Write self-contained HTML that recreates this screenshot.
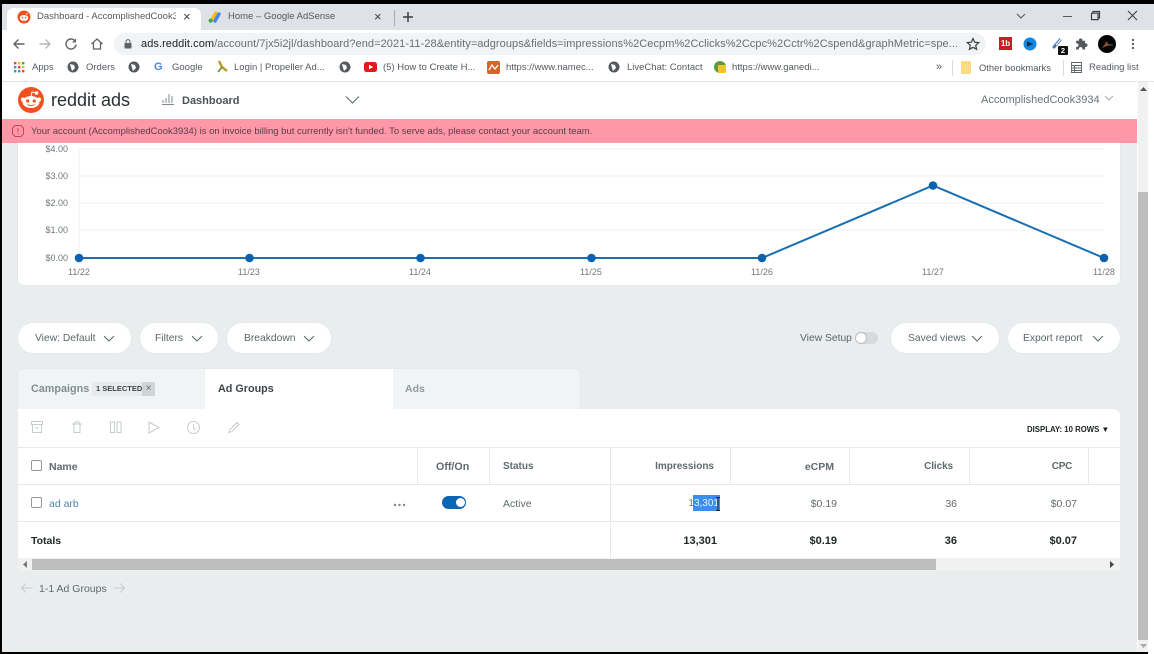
<!DOCTYPE html>
<html><head><meta charset="utf-8"><style>
html,body{margin:0;padding:0;width:1154px;height:654px;overflow:hidden;background:#e9eded}
body{position:relative;font-family:"Liberation Sans",sans-serif;font-size:10.5px;color:#5f6a6d}
.a{position:absolute}
.t{position:absolute;white-space:nowrap;line-height:14px}
.r{position:absolute;white-space:nowrap;line-height:14px;transform:translateX(-100%)}
.pill{position:absolute;top:323px;height:30px;background:#fff;border-radius:15px;box-shadow:0 0 1px #d5d9d9;color:#5c6669;font-size:10.3px;line-height:31px}
.pill span{position:absolute;left:17px;white-space:nowrap}
.pill svg{position:absolute;top:12px}
.b{font-weight:bold}
.bm{color:#555a5f;font-size:9.5px}
.h{font-weight:bold;color:#5f6a6d;font-size:10px}
.vl{position:absolute;width:1px;background:#e8eaea}
.hl{position:absolute;height:1px;background:#e8eaea;left:18px;width:1102px}
</style></head><body>
<!-- frame -->
<div class="a" style="left:0;top:0;width:1154px;height:4px;background:#000"></div>
<div class="a" style="left:0;top:4px;width:1154px;height:26px;background:#dee1e6"></div>
<div class="a" style="left:7px;top:8px;width:194px;height:22px;background:#fff;border-radius:7px 7px 0 0"></div>
<div class="a" style="left:0;top:30px;width:1154px;height:51px;background:#fff"></div>
<div class="a" style="left:0;top:81px;width:1154px;height:1px;background:#e2e4e6"></div>
<!-- tabs -->
<svg class="a" style="left:17px;top:10px" width="14" height="14" viewBox="0 0 14 14"><circle cx="7" cy="7" r="6.5" fill="#f1501f"/><ellipse cx="7" cy="8" rx="4.2" ry="3" fill="#fff"/><circle cx="5.4" cy="7.6" r=".8" fill="#f1501f"/><circle cx="8.6" cy="7.6" r=".8" fill="#f1501f"/><circle cx="9.8" cy="3.8" r=".8" fill="#fff"/></svg>
<div class="t" style="left:37px;top:10px;font-size:9.5px;color:#55595e;width:139px;overflow:hidden">Dashboard - AccomplishedCook3</div>
<div class="t" style="left:183px;top:10px;font-size:13px;color:#3c4043">×</div>
<svg class="a" style="left:208px;top:11px" width="14" height="12" viewBox="0 0 14 12"><path d="M3 10L8 2" stroke="#fbbc04" stroke-width="3.4" stroke-linecap="round"/><path d="M7 10L11 3" stroke="#4285f4" stroke-width="3.4" stroke-linecap="round"/><circle cx="2.6" cy="9.6" r="2" fill="#34a853"/></svg>
<div class="t" style="left:228px;top:10px;font-size:9.5px;color:#55595e">Home – Google AdSense</div>
<div class="t" style="left:374px;top:10px;font-size:13px;color:#3c4043">×</div>
<div class="a" style="left:394px;top:10px;width:1px;height:16px;background:#a8abb0"></div>
<svg class="a" style="left:402px;top:11px" width="12" height="12"><path d="M6 1v10M1 6h10" stroke="#3c4043" stroke-width="1.5"/></svg>
<svg class="a" style="left:1015px;top:11px" width="12" height="10"><path d="M2 3l4 4 4-4" fill="none" stroke="#55595e" stroke-width="1.1"/></svg>
<div class="a" style="left:1063px;top:16px;width:9px;height:1.4px;background:#55595e"></div>
<svg class="a" style="left:1090px;top:10px" width="11" height="11"><path d="M3 3V1.5h6.5V8H8M1.5 3.2H8v6.4H1.500z" fill="none" stroke="#3c4043" stroke-width="1.2"/></svg>
<svg class="a" style="left:1127px;top:10px" width="11" height="11"><path d="M1 1l9 9M10 1l-9 9" stroke="#3c4043" stroke-width="1.1"/></svg>
<!-- toolbar -->
<svg class="a" style="left:12px;top:37px" width="14" height="14"><path d="M12.5 7H2M6.5 2.5L2 7l4.5 4.5" fill="none" stroke="#5f6368" stroke-width="1.4"/></svg>
<svg class="a" style="left:38px;top:37px" width="14" height="14"><path d="M1.5 7H12M7.5 2.5L12 7l-4.5 4.5" fill="none" stroke="#b6b9bd" stroke-width="1.4"/></svg>
<svg class="a" style="left:64px;top:37px" width="14" height="14"><path d="M11.4 4.6A5 5 0 1 0 12 7.5" fill="none" stroke="#5f6368" stroke-width="1.4"/><path d="M12 1.5v4H8z" fill="#5f6368"/></svg>
<svg class="a" style="left:90px;top:37px" width="14" height="14"><path d="M1.5 7L7 2l5.5 5M3.5 6v6h7V6" fill="none" stroke="#5f6368" stroke-width="1.3"/></svg>
<div class="a" style="left:114px;top:33px;width:872px;height:22px;background:#f1f3f4;border-radius:11px"></div>
<svg class="a" style="left:124px;top:39px" width="8" height="10"><rect x=".5" y="4" width="7" height="5.5" rx=".8" fill="#5f6368"/><path d="M2 4.5V2.6a2 2 0 0 1 4 0v2" fill="none" stroke="#5f6368"/></svg>
<div class="t" style="left:141px;top:37px;font-size:11px;color:#6a6e73;letter-spacing:.07px;width:820px;overflow:hidden"><span style="color:#202124">ads.reddit.com</span>/account/7jx5i2jl/dashboard?end=2021-11-28&amp;entity=adgroups&amp;fields=impressions%2Cecpm%2Cclicks%2Ccpc%2Cctr%2Cspend&amp;graphMetric=spe...</div>
<svg class="a" style="left:966px;top:37px" width="14" height="14" viewBox="0 0 14 14"><path d="M7 1.5l1.7 3.7 4 .4-3 2.7.9 4L7 10.3l-3.6 2 .9-4-3-2.7 4-.4z" fill="none" stroke="#3c4043" stroke-width="1.2"/></svg>
<div class="a" style="left:999px;top:37px;width:13px;height:13px;background:#c9201f;color:#fff;font-size:8px;font-weight:bold;line-height:13px;text-align:center">1b</div>
<svg class="a" style="left:1023px;top:37px" width="14" height="14"><circle cx="7" cy="7" r="6.5" fill="#1187e0"/><path d="M4 4.3L10.3 7 4 9.8z" fill="#14324f"/></svg>
<svg class="a" style="left:1051px;top:37px" width="13" height="13"><path d="M3 10l6-7" stroke="#4a77b8" stroke-width="3" stroke-linecap="round"/><path d="M5 8l5-6" stroke="#fff" stroke-width="1"/></svg>
<div class="a" style="left:1058px;top:46px;width:10px;height:9px;background:#111;color:#fff;font-size:7.5px;font-weight:bold;line-height:9px;text-align:center;border-radius:1px">2</div>
<svg class="a" style="left:1075px;top:37px" width="13" height="13" viewBox="0 0 12 12"><path d="M1 3.5h2.6a1.7 1.7 0 1 1 3.2 0H9.3v2.4a1.7 1.7 0 1 1 0 3.2V11.5H6.800a1.7 1.7 0 1 0-3.2 0H1V9.100a1.7 1.7 0 1 0 0-3.2z" fill="#55595e"/></svg>
<svg class="a" style="left:1098px;top:35px" width="18" height="18"><circle cx="9" cy="9" r="9" fill="#050505"/><path d="M4 13l5-7 1 3 4 .5-5 1.500z" fill="#8a5230"/><path d="M10 10h5" stroke="#3e6b3a"/></svg>
<svg class="a" style="left:1131px;top:38px" width="4" height="12"><circle cx="2" cy="2" r="1.2" fill="#5f6368"/><circle cx="2" cy="6" r="1.2" fill="#5f6368"/><circle cx="2" cy="10" r="1.2" fill="#5f6368"/></svg>
<!-- bookmarks -->
<svg class="a" style="left:14px;top:62px" width="11" height="11"><g><rect x="0" y="0" width="2.4" height="2.4" fill="#ea4335"/><rect x="4" y="0" width="2.4" height="2.4" fill="#fbbc04"/><rect x="8" y="0" width="2.4" height="2.4" fill="#34a853"/><rect x="0" y="4" width="2.4" height="2.4" fill="#4285f4"/><rect x="4" y="4" width="2.4" height="2.4" fill="#ea4335"/><rect x="8" y="4" width="2.4" height="2.4" fill="#fbbc04"/><rect x="0" y="8" width="2.4" height="2.4" fill="#34a853"/><rect x="4" y="8" width="2.4" height="2.4" fill="#4285f4"/><rect x="8" y="8" width="2.4" height="2.4" fill="#ea4335"/></g></svg>
<div class="t bm" style="left:32px;top:61px">Apps</div>
<svg class="a" style="left:67px;top:61px" width="12" height="12"><circle cx="6" cy="6" r="5.5" fill="#55595e"/><path d="M3 3l4 1 1 3-3 3-1-3z" fill="#fff"/></svg>
<div class="t bm" style="left:86px;top:61px">Orders</div>
<svg class="a" style="left:128px;top:61px" width="12" height="12"><circle cx="6" cy="6" r="5.5" fill="#55595e"/><path d="M3 3l4 1 1 3-3 3-1-3z" fill="#fff"/></svg>
<div class="t" style="left:154px;top:60px;font-size:11px;font-weight:bold;color:#4285f4">G</div>
<div class="t bm" style="left:172px;top:61px">Google</div>
<svg class="a" style="left:216px;top:60px" width="14" height="14"><path d="M3 1l3 6 5 4" fill="none" stroke="#b59a1c" stroke-width="2.4"/><path d="M2 12l4-5" stroke="#6f8a2b" stroke-width="1.6"/></svg>
<div class="t bm" style="left:234px;top:61px">Login | Propeller Ad...</div>
<svg class="a" style="left:339px;top:61px" width="12" height="12"><circle cx="6" cy="6" r="5.5" fill="#55595e"/><path d="M3 3l4 1 1 3-3 3-1-3z" fill="#fff"/></svg>
<svg class="a" style="left:364px;top:62px" width="13" height="10"><rect width="13" height="10" rx="2.5" fill="#e01b1b"/><path d="M5 2.6L9 5 5 7.4z" fill="#fff"/></svg>
<div class="t bm" style="left:383px;top:61px">(5) How to Create H...</div>
<div class="a" style="left:487px;top:61px;width:13px;height:13px;background:#d9632a;border-radius:2px"></div>
<svg class="a" style="left:488px;top:63px" width="11" height="9"><path d="M1 7l3-5 3 4 3-4" fill="none" stroke="#fff" stroke-width="1.3"/></svg>
<div class="t bm" style="left:506px;top:61px">https://www.namec...</div>
<svg class="a" style="left:608px;top:61px" width="12" height="12"><circle cx="6" cy="6" r="5.5" fill="#55595e"/><path d="M3 3l4 1 1 3-3 3-1-3z" fill="#fff"/></svg>
<div class="t bm" style="left:627px;top:61px">LiveChat: Contact</div>
<svg class="a" style="left:713px;top:60px" width="14" height="14"><circle cx="7" cy="7" r="6" fill="#5c9a3a"/><rect x="5" y="5" width="8" height="8" rx="1" fill="#f2c230"/></svg>
<div class="t bm" style="left:732px;top:61px">https://www.ganedi...</div>
<div class="t" style="left:936px;top:60px;font-size:11px;color:#55595e">»</div>
<div class="a" style="left:952px;top:60px;width:1px;height:16px;background:#d8dadd"></div>
<div class="a" style="left:961px;top:61px;width:10px;height:13px;background:#fbdc85;border-radius:1px"></div>
<div class="t bm" style="left:979px;top:61px;font-size:9.4px">Other bookmarks</div>
<div class="a" style="left:1063px;top:60px;width:1px;height:16px;background:#d8dadd"></div>
<svg class="a" style="left:1071px;top:62px" width="11" height="11"><path d="M.5.5h10v10H.5zM.5 3.500h10M.5 6h10M.5 8.500h10M3.500 3.500v7" fill="none" stroke="#5f6368" stroke-width=".9"/></svg>
<div class="t bm" style="left:1089px;top:61px">Reading list</div>
<!-- header -->
<div class="a" style="left:0;top:82px;width:1154px;height:37px;background:#fff"></div>
<svg class="a" style="left:18px;top:87px" width="26" height="26" viewBox="0 0 26 26"><circle cx="13" cy="13" r="13" fill="#f1501f"/><ellipse cx="13" cy="15" rx="8.5" ry="6" fill="#fff"/><circle cx="5" cy="12.5" r="2" fill="#fff"/><circle cx="21" cy="12.5" r="2" fill="#fff"/><circle cx="9.7" cy="14" r="1.6" fill="#f1501f"/><circle cx="16.3" cy="14" r="1.6" fill="#f1501f"/><path d="M9.5 17.5q3.5 2.2 7 0" fill="none" stroke="#f1501f" stroke-width="1"/><path d="M13 9.5l1-4.5 4 1" fill="none" stroke="#fff" stroke-width="1"/><circle cx="18.5" cy="6" r="1.8" fill="#fff"/></svg>
<div class="t" style="left:51px;top:90px;font-size:18px;line-height:20px;color:#2a2f33">reddit ads</div>
<svg class="a" style="left:162px;top:93px" width="13" height="12"><path d="M1 7v3M4 5v5M7 1v9M10 3v7M0 11.5h12" stroke="#7d8a8f" stroke-width="1"/></svg>
<div class="t b" style="left:182px;top:94px;font-size:11px;color:#4b5357">Dashboard</div>
<svg class="a" style="left:345px;top:95px" width="15" height="10"><path d="M1 1.5l6.5 6.5L14 1.500" fill="none" stroke="#5f6a6d" stroke-width="1.1"/></svg>
<div class="t" style="left:981px;top:93px;font-size:11px;color:#6a7377">AccomplishedCook3934</div>
<svg class="a" style="left:1104px;top:95px" width="10" height="7"><path d="M1 1l4 4 4-4" fill="none" stroke="#a7adb0"/></svg>
<!-- banner -->
<div class="a" style="left:0;top:119px;width:1137px;height:24px;background:#ff97a8"></div>
<svg class="a" style="left:11px;top:124px" width="14" height="14"><path d="M4 1.5h6L12.5 4v6L10 12.5H4L1.5 10V4z" fill="none" stroke="#c4475a"/><path d="M7 4v4M7 9.3v1" stroke="#c4475a"/></svg>
<div class="t" style="left:31px;top:125px;font-size:9.48px;color:#5a3d43">Your account (AccomplishedCook3934) is on invoice billing but currently isn't funded. To serve ads, please contact your account team.</div>
<!-- chart -->
<div class="a" style="left:18px;top:143px;width:1102px;height:142px;background:#fff;border-radius:0 0 6px 6px;box-shadow:0 0 1px #d5d9d9"></div>
<svg class="a" style="left:0;top:143px" width="1137" height="142">
<g stroke="#f0f2f2"><path d="M79 6H1104M79 33H1104M79 60H1104M79 87H1104M79 6V115"/></g>
<path d="M79 115H762L933 42.5L1104 115" fill="none" stroke="#1a6fae" stroke-width="2"/>
<g fill="#0a62ae"><circle cx="79" cy="115" r="4.3"/><circle cx="249.5" cy="115" r="4.3"/><circle cx="420.5" cy="115" r="4.3"/><circle cx="591.5" cy="115" r="4.3"/><circle cx="762" cy="115" r="4.3"/><circle cx="933" cy="42.5" r="4.3"/><circle cx="1104" cy="115" r="4.3"/></g>
</svg>
<div class="r" style="left:68px;top:142px;font-size:9px;color:#6f787b">$4.00</div>
<div class="r" style="left:68px;top:169px;font-size:9px;color:#6f787b">$3.00</div>
<div class="r" style="left:68px;top:196px;font-size:9px;color:#6f787b">$2.00</div>
<div class="r" style="left:68px;top:223px;font-size:9px;color:#6f787b">$1.00</div>
<div class="r" style="left:68px;top:251px;font-size:9px;color:#6f787b">$0.00</div>
<div class="t" style="left:68px;top:265px;font-size:9px;color:#6f787b">11/22</div>
<div class="t" style="left:238px;top:265px;font-size:9px;color:#6f787b">11/23</div>
<div class="t" style="left:409px;top:265px;font-size:9px;color:#6f787b">11/24</div>
<div class="t" style="left:580px;top:265px;font-size:9px;color:#6f787b">11/25</div>
<div class="t" style="left:751px;top:265px;font-size:9px;color:#6f787b">11/26</div>
<div class="t" style="left:922px;top:265px;font-size:9px;color:#6f787b">11/27</div>
<div class="t" style="left:1093px;top:265px;font-size:9px;color:#6f787b">11/28</div>
<!-- pills -->
<div class="pill" style="left:18px;width:113px"><span>View: Default</span><svg style="left:85px" width="12" height="8"><path d="M1 1l5 5 5-5" fill="none" stroke="#5c6669"/></svg></div>
<div class="pill" style="left:140px;width:78px"><span style="left:15px">Filters</span><svg style="left:51px" width="12" height="8"><path d="M1 1l5 5 5-5" fill="none" stroke="#5c6669"/></svg></div>
<div class="pill" style="left:227px;width:104px"><span>Breakdown</span><svg style="left:76px" width="12" height="8"><path d="M1 1l5 5 5-5" fill="none" stroke="#5c6669"/></svg></div>
<div class="t" style="left:800px;top:332px;color:#5c6669;font-size:10.3px">View Setup</div>
<div class="a" style="left:855px;top:332px;width:23px;height:12px;background:#d6dadb;border-radius:6px"></div>
<div class="a" style="left:855px;top:332px;width:10px;height:10px;background:#fff;border:1px solid #b9bfc1;border-radius:50%"></div>
<div class="pill" style="left:891px;width:108px"><span>Saved views</span><svg style="left:80px" width="12" height="8"><path d="M1 1l5 5 5-5" fill="none" stroke="#5c6669"/></svg></div>
<div class="pill" style="left:1008px;width:112px"><span style="left:15px">Export report</span><svg style="left:84px" width="12" height="8"><path d="M1 1l5 5 5-5" fill="none" stroke="#5c6669"/></svg></div>
<!-- tabs -->
<div class="a" style="left:18px;top:369px;width:562px;height:40px;background:#f1f4f4;border-radius:5px 5px 0 0;box-shadow:0 0 1px #d5d9d9"></div>
<div class="a" style="left:18px;top:409px;width:1102px;height:161px;background:#fff;border-radius:0 6px 0 0"></div>
<div class="a" style="left:205px;top:369px;width:188px;height:41px;background:#fff"></div>
<div class="t b" style="left:31px;top:382px;font-size:10.8px;color:#7f8e8f">Campaigns</div>
<div class="a" style="left:92px;top:382px;width:50px;height:14px;background:#e8ebeb"></div>
<div class="t b" style="left:96px;top:382px;font-size:7.5px;color:#3f4648">1 SELECTED</div>
<div class="a" style="left:142px;top:382px;width:13px;height:14px;background:#d0d4d4;color:#5f6a6d;text-align:center;line-height:14px;font-size:10px">×</div>
<div class="t b" style="left:218px;top:382px;font-size:10.8px;color:#3d4548">Ad Groups</div>
<div class="t b" style="left:405px;top:382px;font-size:10.5px;color:#8f9b9c">Ads</div>
<!-- toolbar icons -->
<svg class="a" style="left:30px;top:420px" width="220" height="15" fill="none" stroke="#c6cbcc" stroke-width="1">
<path d="M1.5 1.5h11v3h-11zM2.5 4.5v8h9v-8M5.5 8h3"/>
<path d="M42 4h10M44 4v8.5h6V4M45 4V2h4v2"/>
<rect x="80.5" y="2" width="4" height="10.5"/><rect x="87" y="2" width="4" height="10.5"/>
<path d="M119 2l10 5.5-10 5.5z"/>
<circle cx="163.5" cy="7.5" r="6"/><path d="M163.5 4v4l2.5 2"/>
<path d="M199 12.5l1-3 7-7 2 2-7 7z"/>
</svg>
<div class="t b" style="left:1027px;top:423px;font-size:7.8px;color:#1e2224">DISPLAY: 10 ROWS ▼</div>
<!-- table lines -->
<div class="hl" style="top:447px"></div>
<div class="hl" style="top:484px"></div>
<div class="hl" style="top:521px"></div>
<div class="vl" style="left:417px;top:447px;height:37px"></div>
<div class="vl" style="left:489px;top:447px;height:37px"></div>
<div class="vl" style="left:610px;top:447px;height:111px"></div>
<div class="vl" style="left:730px;top:447px;height:37px"></div>
<div class="vl" style="left:849px;top:447px;height:37px"></div>
<div class="vl" style="left:969px;top:447px;height:37px"></div>
<div class="vl" style="left:1088px;top:447px;height:37px"></div>
<div class="a" style="left:31px;top:460px;width:9px;height:9px;border:1px solid #8f999b;border-radius:2px;background:#fff"></div>
<div class="t h" style="left:49px;top:460px;font-size:10.5px">Name</div>
<div class="t h" style="left:436px;top:460px;font-size:10.7px">Off/On</div>
<div class="t h" style="left:503px;top:460px">Status</div>
<div class="r h" style="left:714px;top:460px">Impressions</div>
<div class="r h" style="left:834px;top:460px;font-size:10.5px">eCPM</div>
<div class="r h" style="left:953px;top:460px;font-size:10px;letter-spacing:-.1px">Clicks</div>
<div class="r h" style="left:1072px;top:460px;font-size:10px;letter-spacing:-.3px">CPC</div>
<div class="a" style="left:31px;top:497px;width:9px;height:9px;border:1px solid #8f999b;border-radius:2px;background:#fff"></div>
<div class="t" style="left:49px;top:497px;color:#4f87a8">ad arb</div>
<svg class="a" style="left:393px;top:503px" width="14" height="4"><circle cx="2" cy="2" r="1.2" fill="#7d8689"/><circle cx="6.5" cy="2" r="1.2" fill="#7d8689"/><circle cx="11" cy="2" r="1.2" fill="#7d8689"/></svg>
<div class="a" style="left:442px;top:496px;width:24px;height:13px;background:#0a66b5;border-radius:7px"></div>
<div class="a" style="left:456px;top:498px;width:9px;height:9px;background:#fff;border-radius:50%"></div>
<div class="t" style="left:503px;top:497px">Active</div>
<div class="a" style="left:693px;top:495px;width:27px;height:16px;background:#3a8ef0"></div>
<div class="r" style="left:719px;top:497px;color:#eaf3ff;font-size:10px"><span style="color:#6b7578">1</span>3,301</div>
<svg class="a" style="left:715px;top:497px" width="6" height="14"><path d="M1 .5h4M3 .5v13M1 13.5h4" stroke="#222" fill="none"/></svg>
<div class="r" style="left:837px;top:497px">$0.19</div>
<div class="r" style="left:957px;top:497px">36</div>
<div class="r" style="left:1077px;top:497px">$0.07</div>
<div class="t b" style="left:31px;top:534px;color:#23282a">Totals</div>
<div class="r b" style="left:717px;top:534px;color:#23282a;font-size:11px">13,301</div>
<div class="r b" style="left:837px;top:534px;color:#23282a;font-size:11px">$0.19</div>
<div class="r b" style="left:957px;top:534px;color:#23282a;font-size:11px">36</div>
<div class="r b" style="left:1077px;top:534px;color:#23282a;font-size:11px">$0.07</div>
<!-- h scrollbar -->
<div class="a" style="left:18px;top:558px;width:1102px;height:13px;background:#f1f1f1"></div>
<div class="a" style="left:32px;top:559px;width:904px;height:11px;background:#bdbdbd"></div>
<svg class="a" style="left:23px;top:561px" width="5" height="7"><path d="M4 0v7L0 3.5z" fill="#777"/></svg>
<svg class="a" style="left:1110px;top:561px" width="5" height="7"><path d="M0 0v7l4-3.5z" fill="#444"/></svg>
<!-- pagination -->
<svg class="a" style="left:20px;top:582px" width="13" height="12"><path d="M12 6H1.5M6 1.5L1.5 6 6 10.5" fill="none" stroke="#c6cbcc"/></svg>
<div class="t" style="left:39px;top:582px;font-size:10.5px;color:#5f6a6d">1-1 Ad Groups</div>
<svg class="a" style="left:113px;top:582px" width="13" height="12"><path d="M1 6h10.5M7 1.5L11.5 6 7 10.5" fill="none" stroke="#c6cbcc"/></svg>
<!-- v scrollbar -->
<div class="a" style="left:1137px;top:82px;width:1px;height:570px;background:#fbfbfb"></div>
<div class="a" style="left:1138px;top:82px;width:10px;height:570px;background:#f1f1f1"></div>
<div class="a" style="left:1138px;top:192px;width:10px;height:448px;background:#bdbdbd"></div>
<svg class="a" style="left:1140px;top:87px" width="7" height="5"><path d="M0 4h7L3.5 0z" fill="#555"/></svg>
<svg class="a" style="left:1140px;top:644px" width="7" height="5"><path d="M0 0h7L3.5 4z" fill="#aaa"/></svg>
<div class="a" style="left:1148px;top:82px;width:6px;height:572px;background:#fff"></div>
<!-- edges -->
<div class="a" style="left:0;top:0;width:2px;height:654px;background:#000"></div>
<div class="a" style="left:0;top:652px;width:1148px;height:2px;background:#000"></div>
</body></html>
